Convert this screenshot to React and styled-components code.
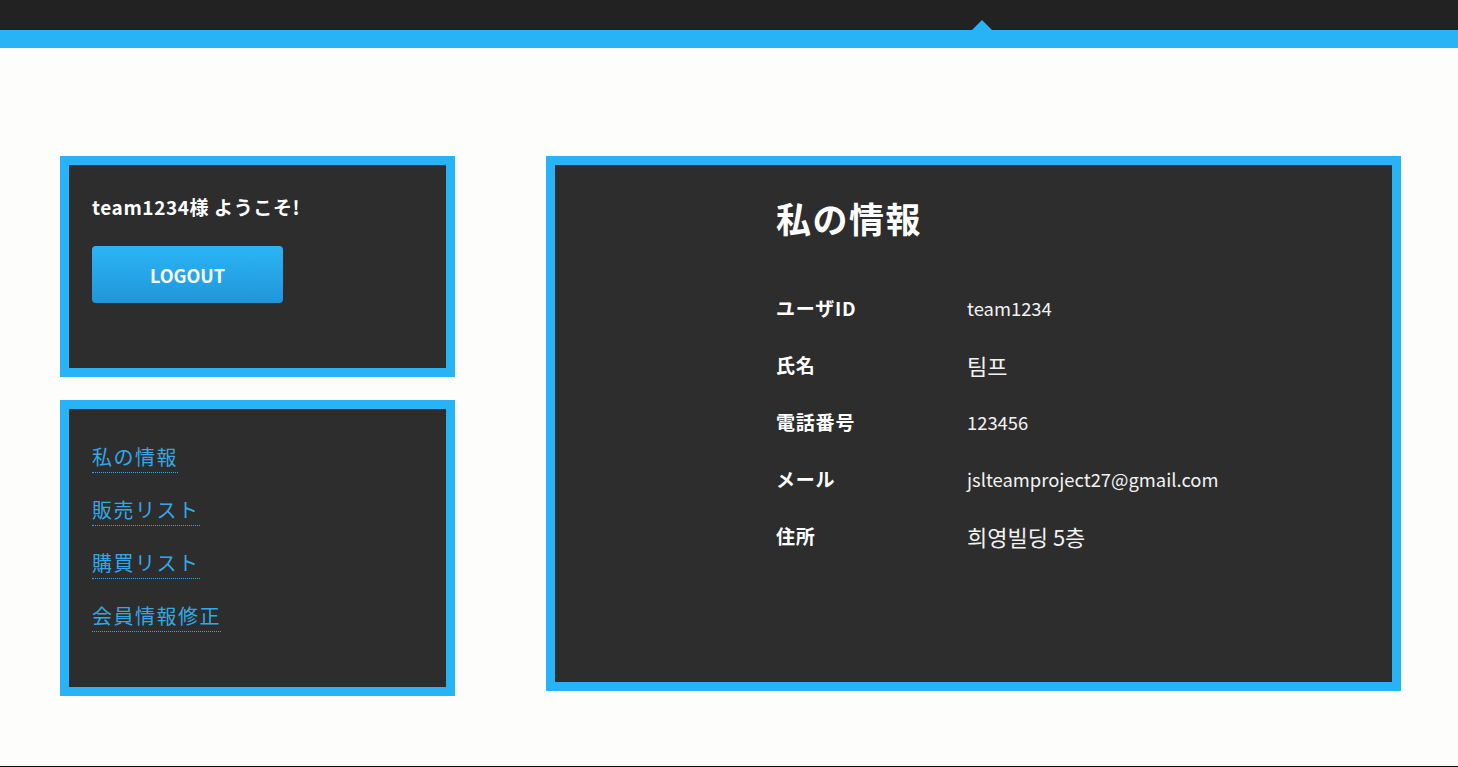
import React from "react";
import styled, { createGlobalStyle } from "styled-components";

const GlobalStyle = createGlobalStyle`
    html, body {
        margin: 0;
        padding: 0;
        background: #fdfdfc;
        font-family: "Noto Sans CJK JP", "Noto Sans CJK KR", "Noto Sans", sans-serif;
        overflow: hidden;
    }
`;

const Header = styled.header`
    position: relative;
    height: 30px;
    background: #222222;
    border-bottom: 18px solid #29b3f7;
`;

const Pointer = styled.span`
    position: absolute;
    left: 972px;
    bottom: 0;
    width: 0;
    height: 0;
    border-left: 10px solid transparent;
    border-right: 10px solid transparent;
    border-bottom: 10px solid #29b3f7;
`;

const Main = styled.main`
    display: flex;
    align-items: flex-start;
    gap: 91px;
    padding: 108px 57px 70px 60px;
`;

const Side = styled.aside`
    display: flex;
    flex-direction: column;
    gap: 23px;
    width: 395px;
    flex-shrink: 0;
`;

const Card = styled.section`
    background: #2d2d2d;
    border: 9px solid #29b3f7;
    box-sizing: border-box;
    padding: ${(p) => p.$pad};
`;

const Welcome = styled.div`
    color: #ffffff;
    font-size: 19px;
    font-weight: 700;
    line-height: 28px;
    letter-spacing: 0.6px;
    margin-bottom: 25px;
`;

const Button = styled.button`
    display: block;
    width: 191px;
    height: 57px;
    border: none;
    border-radius: 4px;
    background: linear-gradient(#2bb5f6, #2096da);
    color: #ffffff;
    font-family: inherit;
    font-size: 18px;
    font-weight: 700;
    cursor: pointer;
`;

const Menu = styled.nav`
    display: flex;
    flex-direction: column;
    align-items: flex-start;
    gap: 22px;
`;

const MenuLink = styled.a`
    color: #33a8e6;
    font-size: 20px;
    line-height: 30px;
    letter-spacing: 1.5px;
    text-decoration: none;
    border-bottom: 1px dotted #33a8e6;
    cursor: pointer;
`;

const Content = styled(Card)`
    flex: 1;
    height: 535px;
`;

const Title = styled.h2`
    margin: 0 0 36px;
    color: #ffffff;
    font-size: 35px;
    font-weight: 700;
    line-height: 50px;
    letter-spacing: 1.5px;
`;

const InfoGrid = styled.dl`
    display: grid;
    grid-template-columns: 191px 1fr;
    grid-auto-rows: 57px;
    align-items: center;
    margin: 0;
`;

const Label = styled.dt`
    color: #ffffff;
    font-size: 19px;
    font-weight: 700;
    letter-spacing: 0.8px;
`;

const Value = styled.dd`
    margin: 0;
    color: #f2f2f2;
    font-size: ${(p) => (p.$large ? "22px" : "18.4px")};
    font-weight: 400;
`;

const Footer = styled.footer`
    height: 2px;
    background: #111111;
`;

const info = [
    ["ユーザID", "team1234"],
    ["氏名", "팀프", true],
    ["電話番号", "123456"],
    ["メール", "jslteamproject27@gmail.com"],
    ["住所", "희영빌딩 5층", true],
];

const links = ["私の情報", "販売リスト", "購買リスト", "会員情報修正"];

const App = () => {
    return (
        <>
            <GlobalStyle />
            <Header>
                <Pointer />
            </Header>
            <Main>
                <Side>
                    <Card $pad="28px 23px 65px">
                        <Welcome>team1234様 ようこそ!</Welcome>
                        <Button>LOGOUT</Button>
                    </Card>
                    <Card $pad="33px 23px 55px">
                        <Menu>
                            {links.map((l) => (
                                <MenuLink key={l}>{l}</MenuLink>
                            ))}
                        </Menu>
                    </Card>
                </Side>
                <Content $pad="28px 0 0 221px">
                    <Title>私の情報</Title>
                    <InfoGrid>
                        {info.map(([k, v, large]) => (
                            <React.Fragment key={k}>
                                <Label>{k}</Label>
                                <Value $large={large}>{v}</Value>
                            </React.Fragment>
                        ))}
                    </InfoGrid>
                </Content>
            </Main>
            <Footer />
        </>
    );
};

export default App;
